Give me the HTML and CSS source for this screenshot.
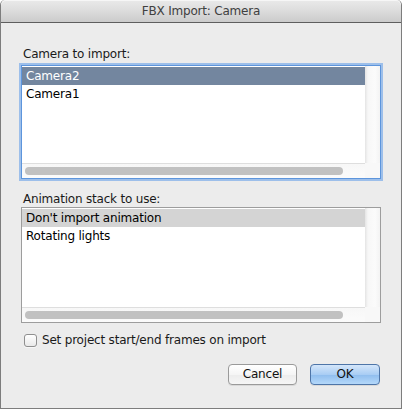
FILE: index.html
```html
<!DOCTYPE html>
<html>
<head>
<meta charset="utf-8">
<link rel="stylesheet" href="styles.css">
</head>
<body>
<div class="window">
  <div class="titlebar">FBX Import: Camera</div>
  <div class="content">
    <div class="label first">Camera to import:</div>
    <div class="listbox focused">
      <div class="rows">
        <div class="row selected">Camera2</div>
        <div class="row">Camera1</div>
      </div>
      <div class="vtrack"></div>
      <div class="htrack"><div class="thumb"></div></div>
      <div class="corner"></div>
    </div>
    <div class="label second">Animation stack to use:</div>
    <div class="listbox">
      <div class="rows">
        <div class="row inactive">Don't import animation</div>
        <div class="row">Rotating lights</div>
      </div>
      <div class="vtrack"></div>
      <div class="htrack"><div class="thumb"></div></div>
      <div class="corner"></div>
    </div>
    <label class="check">
      <span class="box"></span>
      <span class="check-text">Set project start/end frames on import</span>
    </label>
    <div class="buttons">
      <div class="btn">Cancel</div>
      <div class="btn default">OK</div>
    </div>
  </div>
</div>
</body>
</html>
```

FILE: styles.css
```css
html, body {
  margin: 0;
  padding: 0;
  background: #ffffff;
}
body {
  font-family: "DejaVu Sans", "Liberation Sans", sans-serif;
  font-size: 12px;
  letter-spacing: -0.2px;
  color: #000;
}
.window {
  width: 402px;
  height: 409px;
  box-sizing: border-box;
  border: 1px solid #7d7d7d;
  border-top: none;
  border-radius: 5px 5px 0 0;
  background: #ececec;
  overflow: hidden;
  display: flex;
  flex-direction: column;
}
.titlebar {
  height: 22px;
  line-height: 23px;
  border-bottom: 1px solid #5e5e5e;
  background: linear-gradient(to bottom, #eaeaea 0%, #dcdcdc 50%, #cbcbcb 100%);
  border-radius: 5px 5px 0 0;
  text-align: center;
  color: #404040;
  font-size: 12px;
  box-shadow: inset 0 1px 0 #f6f6f6;
}
.content {
  padding: 0 20px 0 20px;
  display: flex;
  flex-direction: column;
}
.label {
  line-height: 16px;
  padding-left: 2px;
  color: #1a1a1a;
}
.label.first {
  margin-top: 23px;
  margin-bottom: 3px;
}
.label.second {
  margin-top: 12px;
  margin-bottom: 0px;
}
.listbox {
  display: grid;
  grid-template-columns: 1fr 15px;
  grid-template-rows: 1fr 15px;
  height: 114px;
  border: 1px solid #9d9d9d;
  background: #fff;
}
.listbox.focused {
  height: 112px;
  border: 1px solid #5d95dc;
  box-shadow: 0 0 0 2px #9dbfea, inset 0 0 0 1px #b9d2f1;
}
.rows {
  background: #fff;
  padding-top: 1px;
}
.row {
  height: 18px;
  line-height: 18px;
  padding-left: 4px;
  white-space: nowrap;
}
.row.selected {
  background: #73869f;
  color: #fff;
}
.row.inactive {
  background: #d4d4d4;
}
.vtrack {
  background: linear-gradient(to right, #e4e4e4 0px, #f7f7f7 3px, #fbfbfb 10px, #f3f3f3 15px);
}
.htrack {
  border-top: 1px solid #dedede;
  background: linear-gradient(to bottom, #f7f7f7, #fbfbfb);
  padding: 3px 0 0 3px;
  box-sizing: border-box;
}
.thumb {
  width: 318px;
  height: 8px;
  border-radius: 4px;
  background: #c1c1c1;
}
.corner {
  background: #f8f8f8;
}
.check {
  display: flex;
  align-items: center;
  margin-top: 9px;
  padding-left: 3px;
  line-height: 16px;
}
.box {
  width: 11px;
  height: 11px;
  border: 1px solid #8f8f8f;
  border-radius: 3px;
  background: linear-gradient(to bottom, #ffffff, #e9e9e9);
  box-shadow: 0 1px 0 rgba(255,255,255,0.6);
  margin-right: 5px;
}
.check-text {
  color: #1a1a1a;
}
.buttons {
  display: flex;
  justify-content: flex-end;
  gap: 13px;
  margin-top: 16px;
  padding-right: 1px;
}
.btn {
  width: 67px;
  height: 19px;
  line-height: 19px;
  text-align: center;
  border: 1px solid #9a9a9a;
  border-radius: 4px;
  background: linear-gradient(to bottom, #ffffff 0%, #f5f5f5 50%, #ececec 51%, #f6f6f6 100%);
  box-shadow: 0 1px 0 rgba(0,0,0,0.08);
  color: #111;
}
.btn.default {
  width: 68px;
  border-color: #4e75a8;
  background: linear-gradient(to bottom, #d4e6fa 0%, #a9cdf4 50%, #8fbdee 51%, #b4d8fa 100%);
}
```
